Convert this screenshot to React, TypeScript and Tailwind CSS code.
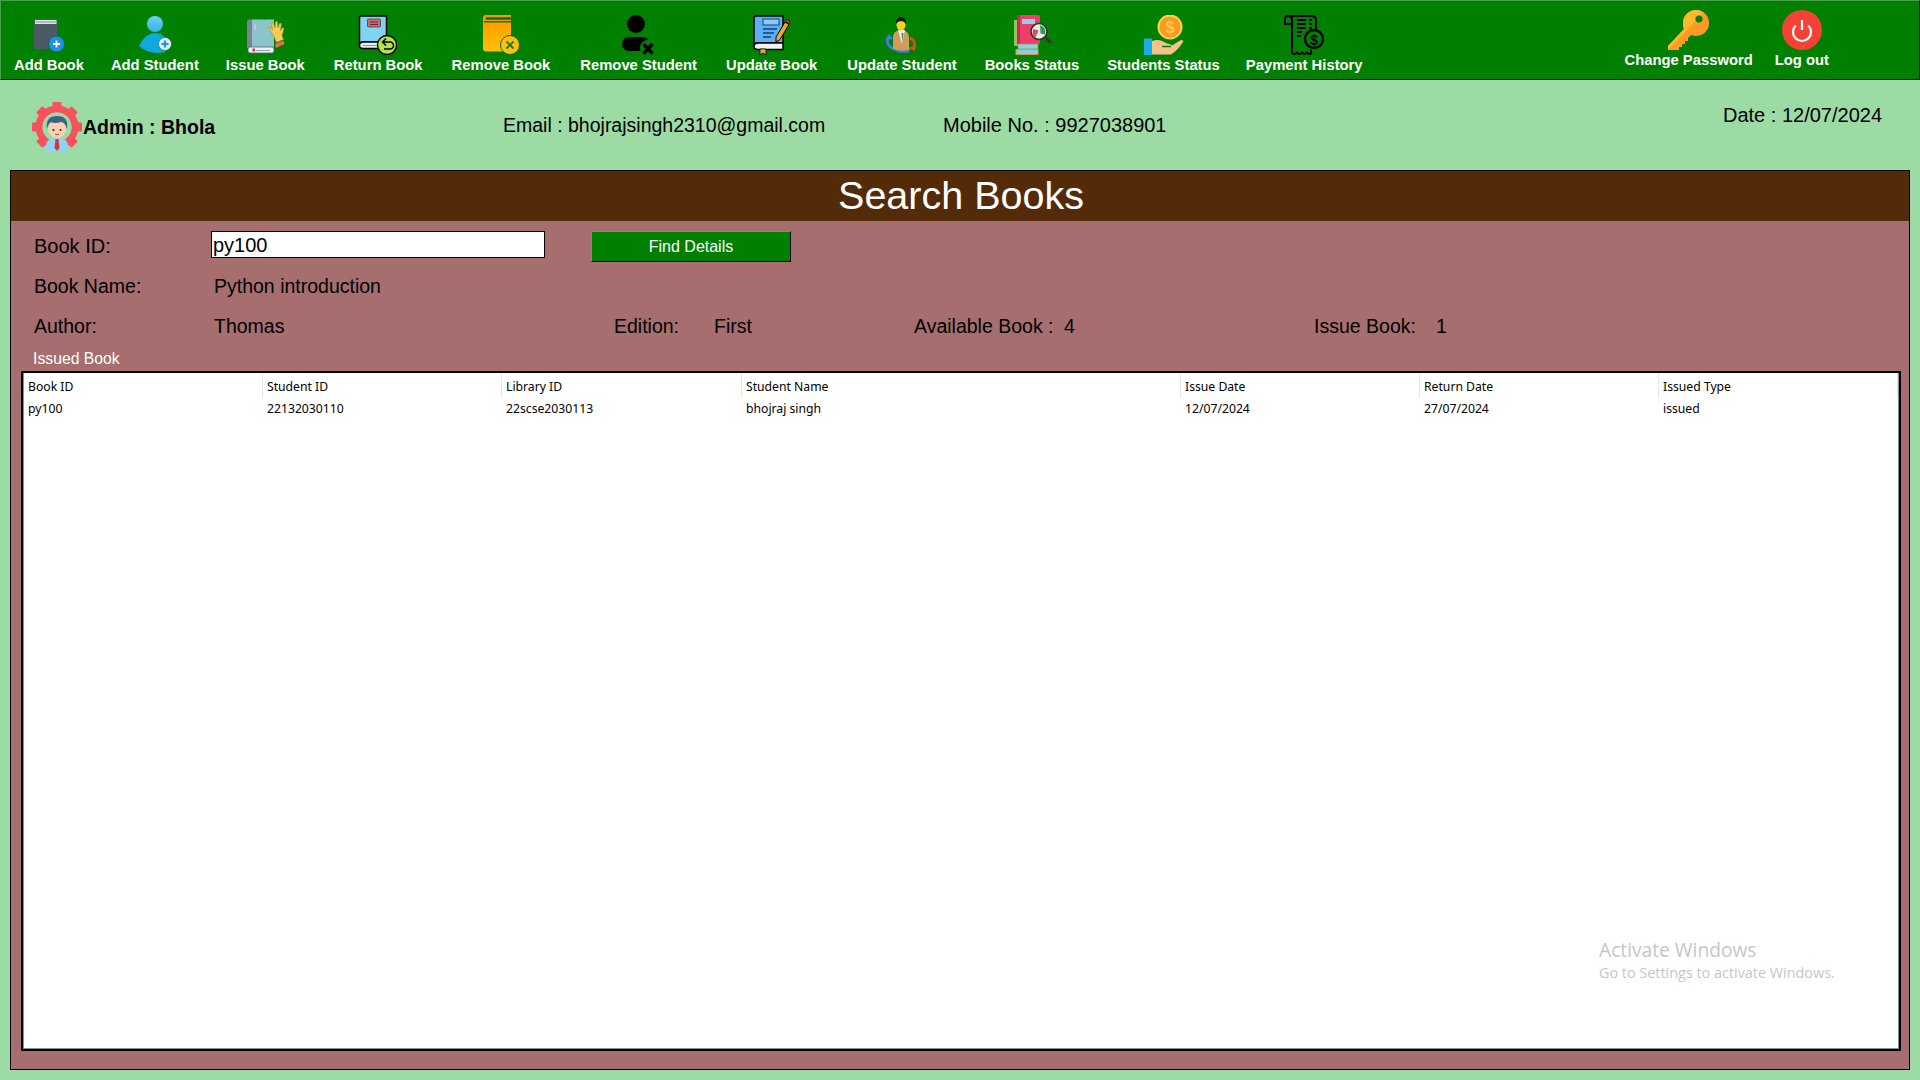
import React from "react";

const IconAddBook = () => (
  <svg width="40" height="40" viewBox="0 0 40 40">
    <path d="M5 6q0-2 2-2h21v30H7q-2 0-2-2z" fill="#4c5a66" />
    <rect x="6" y="5" width="21.500" height="4" rx="0.500" fill="#dfe3e7" />
    <rect x="6.500" y="6.500" width="21" height="1" fill="#87929c" />
    <circle cx="27.500" cy="29" r="8" fill="#1f8fe8" stroke="#0c6a2c" strokeWidth="0.800" />
    <path d="M27.500 25.500v7M24 29h7" stroke="#fff" strokeWidth="1.800" />
  </svg>
);
const IconAddStudent = () => (
  <svg width="40" height="40" viewBox="0 0 40 40">
    <defs>
      <linearGradient id="gs1" x1="0" y1="0" x2="0" y2="1">
        <stop offset="0" stopColor="#6fd0f5" />
        <stop offset="1" stopColor="#2fb4ea" />
      </linearGradient>
    </defs>
    <circle cx="20" cy="9" r="8" fill="url(#gs1)" />
    <path d="M4 31C8 23 14 18 20 18c7 0 12 5 14 11l-4 8q-4 1-8 1-10 0-18-7z" fill="#0fa8e2" />
    <circle cx="30" cy="29" r="6.500" fill="#dcecf5" stroke="#0b6f3a" strokeWidth="0.600" />
    <path d="M30 25.500v7M26.500 29h7" stroke="#2a93d2" strokeWidth="2.200" />
  </svg>
);
const IconIssueBook = () => (
  <svg width="40" height="40" viewBox="0 0 40 40">
    <path d="M2 7q0-2.500 2.500-2.500H7V33H2z" fill="#7b8296" />
    <rect x="7" y="4.500" width="22" height="28" fill="#8cc4cc" />
    <rect x="3" y="32" width="26" height="6" rx="2" fill="#eef1f2" stroke="#5c6470" strokeWidth="0.800" />
    <rect x="7.500" y="33.500" width="2.500" height="3" fill="#cf3d44" />
    <rect x="11" y="35" width="14" height="1" fill="#9aa2aa" />
    <path d="M10 9v6" stroke="#d6dbe2" strokeWidth="1" />
    <path d="M23.500 13l1.500-1 2.500 3-1-7 2-.5 1.500 5.500.5-6.500 2 0 .5 6.500 1.500-5 2 .5-1 7 2-3 1.500 1-2 7 1.500 4-7 3-3-7z" fill="#f7cd58" stroke="#a07c1e" strokeWidth="0.500" />
    <path d="M30 29l8.500-3.500 1 3.500-8.500 4z" fill="#ea6a5c" />
  </svg>
);
const IconReturnBook = () => (
  <svg width="40" height="40" viewBox="0 0 40 40">
    <path d="M1.500 29V3q0-2 2-2h25v26H5q-3.500 0-3.500 3z" fill="#80d4f4" stroke="#000" strokeWidth="1.500" />
    <path d="M1.500 30.500q0-3.500 3.500-3.500h23.500v6.500H5q-3.500 0-3.500-3z" fill="#e7eef2" stroke="#000" strokeWidth="1.500" />
    <path d="M5 30.500h14" stroke="#8a949c" strokeWidth="1" />
    <rect x="9.500" y="4" width="13" height="8" rx="1" fill="#e0606a" stroke="#444" strokeWidth="0.800" />
    <path d="M12 7h8M12 9.500h8" stroke="#333" strokeWidth="0.900" />
    <circle cx="29" cy="30" r="9.500" fill="#b7e04a" stroke="#000" strokeWidth="1.300" />
    <path d="M25 27h7a3.500 3.500 0 010 7h-6M28 23.500L24.500 27l3.500 3.500" fill="none" stroke="#000" strokeWidth="1.500" />
  </svg>
);
const IconRemoveBook = () => (
  <svg width="40" height="40" viewBox="0 0 40 40">
    <defs>
      <linearGradient id="gr1" x1="0" y1="0" x2="0" y2="1">
        <stop offset="0" stopColor="#ff9500" />
        <stop offset="1" stopColor="#ffc107" />
      </linearGradient>
    </defs>
    <path d="M2 3q0-3 3-3h25v2.500H6q-1.500 0-1.500 1T6 4.500h24v32H5q-3 0-3-3z" fill="url(#gr1)" />
    <rect x="5" y="2.500" width="25" height="2" fill="#006f00" />
    <rect x="3" y="6" width="27" height="1.500" fill="#0b7a08" />
    <circle cx="29" cy="30" r="9.500" fill="#fdc010" stroke="#0b6a10" strokeWidth="1" />
    <path d="M25.500 26.500l7 7M32.500 26.500l-7 7" stroke="#1a7a20" strokeWidth="1.800" />
  </svg>
);
const IconRemoveStudent = () => (
  <svg width="40" height="40" viewBox="0 0 40 40">
    <circle cx="17" cy="9" r="9" fill="#000" />
    <rect x="3" y="22" width="28" height="14" rx="7" fill="#000" />
    <circle cx="29" cy="33" r="8" fill="#008000" />
    <path d="M24.500 29l9 9.500M33.500 29l-9 9.500" stroke="#000" strokeWidth="3.600" />
  </svg>
);
const IconUpdateBook = () => (
  <svg width="40" height="40" viewBox="0 0 40 40">
    <path d="M2 30V3q0-2 2-2h27v27H6q-4 0-4 2z" fill="#5cb0f8" stroke="#000" strokeWidth="1.500" />
    <path d="M2 31.500q0-3.500 4-3.500h25v6.500H6q-4 0-4-3z" fill="#f2f5f6" stroke="#000" strokeWidth="1.500" />
    <rect x="11" y="4" width="16" height="6" fill="#8cc8ff" stroke="#15406a" strokeWidth="1" />
    <path d="M11 14h14M11 18h11M11 22h8" stroke="#15406a" strokeWidth="1.300" />
    <path d="M8 34h6v6l-3-2-3 2z" fill="#f0a83c" stroke="#000" strokeWidth="0.800" />
    <path d="M24 27v-5l9-15 4 2.500-9 15z" fill="#f5a623" stroke="#000" strokeWidth="1" />
    <path d="M33.500 6l1-1.500 3.500 1.500-1 3z" fill="#e0404a" stroke="#000" strokeWidth="0.600" />
  </svg>
);
const IconUpdateStudent = () => (
  <svg width="40" height="40" viewBox="0 0 40 40">
    <path d="M7 21c-3 4-2 9 3 12 5 3 11 4 17 3" fill="none" stroke="#3d7be0" strokeWidth="2.800" />
    <path d="M4 25l3-6 4 5z" fill="#3d7be0" />
    <path d="M28 23c5 2 6 7 3 11" fill="none" stroke="#e0452e" strokeWidth="2.800" />
    <path d="M27 33l6 3 1-6z" fill="#e0452e" />
    <path d="M11 34V22q0-5 6-7h4q6 2 6 7v9l1 4q-9 2-17-1z" fill="#d49a5c" />
    <path d="M16 15l4 14 3-14z" fill="#e9f1e8" />
    <path d="M19.500 18l1 9 1-9z" fill="#2e8b57" />
    <ellipse cx="19" cy="10" rx="4.500" ry="5.500" fill="#f6d227" />
    <path d="M14 9q-.5-7 5-7t5 7q-2-3-5-3t-5 3z" fill="#1d1d1d" />
  </svg>
);
const IconBooksStatus = () => (
  <svg width="40" height="40" viewBox="0 0 40 40">
    <rect x="2" y="5" width="8" height="26" rx="1" fill="#93c35a" />
    <rect x="5" y="0" width="23" height="29" rx="1.500" fill="#ee3f68" />
    <rect x="5" y="0" width="3" height="29" fill="#c92a57" />
    <rect x="10" y="4" width="13" height="5" fill="#8fd0ea" />
    <rect x="6" y="29" width="20" height="5" fill="#8cd0e8" stroke="#8fa33c" strokeWidth="0.800" />
    <rect x="4" y="34.500" width="22" height="5" fill="#8ccce4" stroke="#d89a34" strokeWidth="1" />
    <path d="M33 22l6 6" stroke="#333" strokeWidth="2.500" />
    <circle cx="27" cy="16.500" r="8" fill="#e8efe9" stroke="#333" strokeWidth="1.600" />
    <path d="M21.500 14a6 6 0 002 8.500l3-7z" fill="#e14a5a" />
    <path d="M28 10.500a6 6 0 014.500 9l-4-1z" fill="#2a9a55" />
  </svg>
);
const IconStudentsStatus = () => (
  <svg width="40" height="40" viewBox="0 0 40 40">
    <circle cx="26" cy="12" r="12.500" fill="#ffd23f" />
    <circle cx="26" cy="12" r="10.500" fill="#fb9a28" />
    <text x="26" y="18" textAnchor="middle" fontSize="16" fontWeight="700" fill="#ffc94a" fontFamily="Liberation Sans, sans-serif">$</text>
    <rect x="0" y="23.500" width="8" height="16.500" fill="#18ace8" />
    <path d="M8 26q6-2 10 0l5 2.500q4 .5 5 2l9-5.500q3 0 2 2-5 8-12 12.500H8z" fill="#f7c187" />
    <path d="M18 31.500h9" stroke="#0f7a12" strokeWidth="1.500" />
  </svg>
);
const IconPaymentHistory = () => (
  <svg width="40" height="40" viewBox="0 0 40 40">
    <path d="M8 38V5q0-4-3.500-4H27q5 0 5 4v9" fill="none" stroke="#000" strokeWidth="2" />
    <path d="M1 9V4q0-3 3.500-3T8 5v4z" fill="none" stroke="#000" strokeWidth="2" />
    <path d="M13 5h9M25 5h3M13 9h9M25 9h3M13 13h9M25 13h3M13 17h5M13 21h4" stroke="#000" strokeWidth="1.800" />
    <path d="M8 38l2.500 1.500 2.500-2 2.500 2 2.500-2 2.500 2 2.500-2 2.500 2 1.500-1v-4" fill="none" stroke="#000" strokeWidth="1.800" />
    <circle cx="30" cy="24" r="9" fill="#008000" stroke="#000" strokeWidth="2.400" />
    <text x="30" y="29.500" textAnchor="middle" fontSize="14.500" fontWeight="700" fill="#000" fontFamily="Liberation Sans, sans-serif">$</text>
  </svg>
);
const keyPath =
  "M15 13a13 13 0 1113 13 13 13 0 01-5-1l-3 3v3h-3v3h-3v3h-3v3H0v-4L16 19a13 13 0 01-1-6z";
const IconKey = () => (
  <svg width="42" height="40" viewBox="0 0 42 40">
    <defs>
      <clipPath id="keyHalf">
        <path d="M0 0h38L0 40z" />
      </clipPath>
    </defs>
    <path d={keyPath} fill="#fd9b24" />
    <path d={keyPath} fill="#fdb92d" clipPath="url(#keyHalf)" />
    <circle cx="31" cy="9" r="3.600" fill="#008000" />
  </svg>
);
const IconPower = () => (
  <svg width="40" height="40" viewBox="0 0 40 40">
    <circle cx="20" cy="20" r="20" fill="#f44336" />
    <path d="M13.800 15.500a9 9 0 1012.400 0" fill="none" stroke="#fff" strokeWidth="2.200" />
    <path d="M20 10v10" stroke="#fff" strokeWidth="2.200" />
  </svg>
);
const IconAdmin = () => (
  <svg width="50" height="50" viewBox="0 0 50 50">
    <g fill="#f9505e">
      {[0, 45, 90, 135, 180, 225, 270, 315].map((a) => (
        <rect key={a} x="20.500" y="0" width="9" height="9" rx="1" transform={`rotate(${a} 25 25)`} />
      ))}
    </g>
    <circle cx="25" cy="25" r="18" fill="none" stroke="#f9505e" strokeWidth="7" />
    <circle cx="25" cy="25" r="14.500" fill="#9ddba5" />
    <path d="M14 50v-6q0-7 8-8h6q8 1 8 8v6z" fill="#8fd3f5" />
    <path d="M23.500 37h3l1 9-2.500 3-2.500-3z" fill="#d9333f" />
    <circle cx="25" cy="27" r="9" fill="#fdd0b1" />
    <path d="M15 27q-2-13 10-13t10 13q-2-7-6-7-7 2-10 0-3 2-4 7z" fill="#3f6187" />
    <circle cx="21.500" cy="28" r="1" fill="#222" />
    <circle cx="28.500" cy="28" r="1" fill="#222" />
    <path d="M23 32q2 1.500 4 0" stroke="#d9333f" strokeWidth="1" fill="none" />
  </svg>
);

const navItems: [string, React.ReactNode, string][] = [
  ["Add Book", <IconAddBook />, "ml-[13px]"],
  ["Add Student", <IconAddStudent />, "ml-[27px]"],
  ["Issue Book", <IconIssueBook />, "ml-[27px]"],
  ["Return Book", <IconReturnBook />, "ml-[29px]"],
  ["Remove Book", <IconRemoveBook />, "ml-[29px]"],
  ["Remove Student", <IconRemoveStudent />, "ml-[30px]"],
  ["Update Book", <IconUpdateBook />, "ml-[29px]"],
  ["Update Student", <IconUpdateStudent />, "ml-[30px]"],
  ["Books Status", <IconBooksStatus />, "ml-[28px]"],
  ["Students Status", <IconStudentsStatus />, "ml-[28px]"],
  ["Payment History", <IconPaymentHistory />, "ml-[26px]"],
];

const columns = [
  { name: "Book ID", value: "py100", w: "w-[239px]" },
  { name: "Student ID", value: "22132030110", w: "w-[239px]" },
  { name: "Library ID", value: "22scse2030113", w: "w-[240px]" },
  { name: "Student Name", value: "bhojraj singh", w: "w-[439px]" },
  { name: "Issue Date", value: "12/07/2024", w: "w-[239px]" },
  { name: "Return Date", value: "27/07/2024", w: "w-[239px]" },
  { name: "Issued Type", value: "issued", w: "flex-1" },
];

export default function App() {
  return (
    <div className="relative w-[1920px] h-[1080px] overflow-hidden bg-[#9ddba5] font-['Liberation_Sans',sans-serif] text-black">
      <header className="flex h-[80px] bg-[#008000] border-t border-l border-t-[#4ca04c] border-l-[#4ca04c] border-b border-r border-b-black border-r-black text-white font-bold text-[14.8px] leading-[16px]">
        <nav className="flex pt-[14px]">
          {navItems.map(([label, icon, ml]) => (
            <div key={label} className={`${ml} flex flex-col items-center whitespace-nowrap`}>
              <div className="h-[40px] flex justify-center">{icon}</div>
              <span className="mt-[2px]">{label}</span>
            </div>
          ))}
        </nav>
        <div className="ml-auto flex gap-[22px] pr-[90px] pt-[9px]">
          <div className="flex flex-col items-center whitespace-nowrap">
            <IconKey />
            <span className="mt-[2px]">Change Password</span>
          </div>
          <div className="flex flex-col items-center whitespace-nowrap">
            <IconPower />
            <span className="mt-[2px]">Log out</span>
          </div>
        </div>
      </header>

      <section className="flex h-[90px] pl-[32px] text-[20px] leading-[24px]">
        <div className="w-[50px] mt-[22px]"><IconAdmin /></div>
        <div className="w-[420px] ml-[1px] mt-[35px] font-bold text-[19.5px]">Admin : Bhola</div>
        <div className="w-[440px] mt-[33px] text-[19.5px]">Email : bhojrajsingh2310@gmail.com</div>
        <div className="w-[780px] mt-[33px]">Mobile No. : 9927038901</div>
        <div className="mt-[23px]">Date : 12/07/2024</div>
      </section>

      <main className="mx-[10px] h-[900px] border border-black bg-[#a66e6e] flex flex-col">
        <h1 className="h-[50px] pl-[2px] bg-[#542b09] text-white text-[39.5px] leading-[48px] text-center">Search Books</h1>
        <div className="pl-[23px] mt-[10px] text-[20px] leading-[24px]">
          <div className="flex h-[31px]">
            <span className="w-[177px] mt-[3px]">Book ID:</span>
            <input
              readOnly
              value="py100"
              className="w-[334px] h-[27px] bg-white border border-black px-[1px] pt-[2px] text-[20px] leading-[22px] outline-none"
            />
            <button className="ml-[46px] w-[200px] h-[31px] pt-[1px] bg-[#008000] border border-t-[#5aa65a] border-l-[#5aa65a] border-b-black border-r-black text-white text-[16px]">
              Find Details
            </button>
          </div>
          <div className="flex mt-[12px] h-[24px] text-[19.5px]">
            <span className="w-[180px]">Book Name:</span>
            <span>Python introduction</span>
          </div>
          <div className="flex mt-[16px] h-[24px] text-[19.5px]">
            <span className="w-[180px]">Author:</span>
            <span className="w-[400px]">Thomas</span>
            <span className="w-[100px]">Edition:</span>
            <span className="w-[200px]">First</span>
            <span className="w-[150px]">Available Book :</span>
            <span className="w-[250px]">4</span>
            <span className="w-[122px]">Issue Book:</span>
            <span>1</span>
          </div>
          <div className="-ml-[1px] mt-[12px] h-[18px] text-white text-[15.75px] leading-[18px]">Issued Book</div>
        </div>
        <div className="mt-[3px] ml-[10px] mr-[8px] mb-[18px] flex-1 border-2 border-black bg-white font-['Noto_Sans',sans-serif] text-[12.2px]">
          <div className="h-full border-r border-b border-r-[#8a8f9c] border-b-[#8a8f9c] border-l border-l-[#8a8f9c] flex">
            {columns.map((c) => (
              <div key={c.name} className={`${c.w} whitespace-nowrap`}>
                <div className="h-[25px] pl-[4px] pt-[1px] leading-[25px] border-r border-[#e6e6e6]">{c.name}</div>
                <div className="h-[20px] pl-[4px] pt-[1px] leading-[20px]">{c.value}</div>
              </div>
            ))}
          </div>
        </div>
      </main>

      <div className="absolute left-[1599px] top-[936px] font-['Open_Sans',sans-serif] text-[#c6c6c6] pointer-events-none">
        <div className="text-[19.2px] leading-[28px]">Activate Windows</div>
        <div className="text-[14.4px] leading-[18px]">Go to Settings to activate Windows.</div>
      </div>
    </div>
  );
}
